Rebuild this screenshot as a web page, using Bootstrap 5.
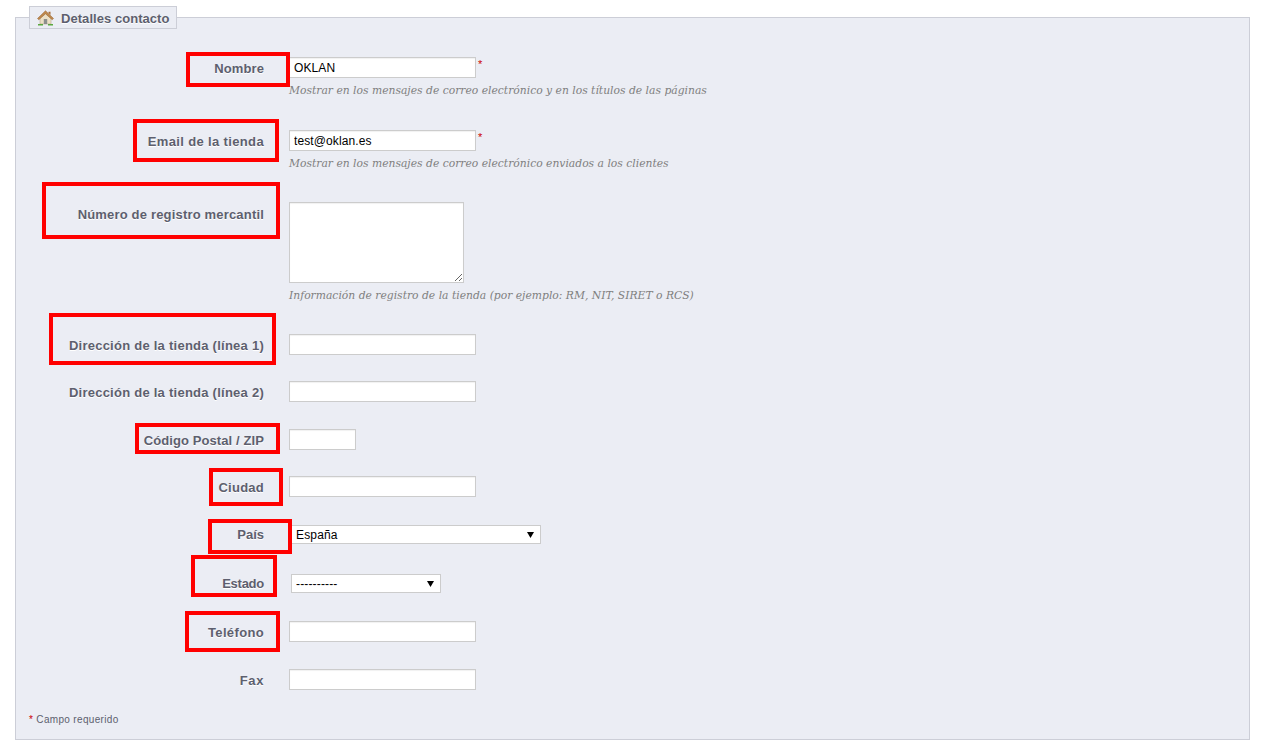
<!DOCTYPE html>
<html lang="es">
<head>
<meta charset="utf-8">
<title>Detalles contacto</title>
<link href="https://cdn.jsdelivr.net/npm/bootstrap@5.3.0/dist/css/bootstrap.min.css" rel="stylesheet">
<style>
html,body{background:#fff;height:753px;overflow:hidden}
body{font-family:"Liberation Sans",Arial,sans-serif;font-size:12px;color:#5d5f6e}
.sheet{position:relative;height:753px;padding:6px 15px 0}
.pane{background:#ebedf4;border:1px solid #ccced7;padding:28px 0 13px;height:734px}
.pane legend{float:none;width:auto;margin:0 0 0 13px;padding:0 6px 0 7px;height:23px;background:#ebedf4;border:1px solid #ccced7;font-size:13px;font-weight:700;line-height:23px;color:#5d5f6e;text-shadow:0 1px 0 #fff;display:flex;align-items:center;gap:7px}
.pane legend span{letter-spacing:.05px;padding-top:2px}
.gap26{margin-bottom:26px}
.gap27{margin-bottom:27px}
.gap28{margin-bottom:28px}
.gap31{margin-bottom:31px}
.gap32{margin-bottom:32px}
.flabel{width:248px;height:21px;margin:0 25px 0 0;flex:none;text-align:right;font-size:13px;font-weight:700;line-height:23px;letter-spacing:.25px;color:#5d5f6e;text-shadow:0 1px 0 #fff}
.flabel-top{padding-top:1px}
.flabel-sel{line-height:21px}
.track-nombre{letter-spacing:.1px}
.track-email{letter-spacing:.36px}
.track-numero{letter-spacing:.18px}
.track-codigo{letter-spacing:.1px}
.track-pais{letter-spacing:0}
.track-estado{letter-spacing:-.25px}
.track-tel{letter-spacing:.35px}
.track-fax{letter-spacing:.6px}
.form-control.finput{width:187px;height:21px;min-height:0;padding:0 4px;border:1px solid #ccc;border-radius:0;font-size:12px;line-height:19px;letter-spacing:.1px;color:#000;background:#fff;box-shadow:inset 0 1px 1px rgba(0,0,0,.06);font-family:"Liberation Sans",Arial,sans-serif}
.form-control.fshort{width:67px}
.form-control.farea{width:175px;height:81px;resize:both}
.form-select.fselect{height:19px;padding:1px 0 0 4px;border:1px solid #ccc;border-radius:0;font-size:12px;line-height:17px;letter-spacing:.15px;color:#000;margin-left:2px;box-shadow:none;background:#fff url("data:image/svg+xml,%3Csvg xmlns='http://www.w3.org/2000/svg' width='7' height='6'%3E%3Cpath d='M0 0h7L3.500 6z' fill='%23000'/%3E%3C/svg%3E") no-repeat right 6px center/7px 6px;font-family:"Liberation Sans",Arial,sans-serif}
.fwide{width:250px}
.fmid{width:150px}
.reqstar{color:#c00;font-size:11px;line-height:14px;margin-left:2px;align-self:flex-start}
.fhint{margin:6px 0 0 273px;font-family:"DejaVu Serif",Georgia,serif;font-style:italic;font-size:10.75px;line-height:14px;color:#7f7f7f}
.ffoot{margin:23px 0 0 13px;font-size:10px;line-height:14px;letter-spacing:.33px;color:#5d5f6e}
.ffoot b{color:#c00;font-weight:400}
.redbox{position:absolute;border:4px solid #f00;pointer-events:none}
.rb1{left:186px;top:52px;width:104px;height:35px}
.rb2{left:133px;top:119px;width:146px;height:43px}
.rb3{left:42px;top:182px;width:238px;height:57px}
.rb4{left:49px;top:313px;width:227px;height:52px}
.rb5{left:135px;top:423px;width:145px;height:31px}
.rb6{left:209px;top:468px;width:74px;height:38px}
.rb7{left:208px;top:519px;width:84px;height:35px}
.rb8{left:191px;top:555px;width:86px;height:42px}
.rb9{left:185px;top:611px;width:95px;height:41px}
</style>
</head>
<body>
<div class="sheet">
<fieldset class="pane">
<legend>
<svg width="17" height="16" viewBox="0 0 17 16" aria-hidden="true">
<path d="M3 8v6h11V8L8.500 3z" fill="#ece0c6" stroke="#b9a98a" stroke-width=".6"/>
<path d="M6.800 9h3.400v5H6.800z" fill="#8d8f8c"/>
<path d="M.5 8.500 8.500.8l8 7.700-1.300 1.200-6.700-5.900-6.700 5.900z" fill="#c08a4e" stroke="#8f5a28" stroke-width=".5"/>
<path d="M11.500 1.800h2v3.200l-2-1.900z" fill="#a86f38"/>
<path d="M1 14h5v1.600H1zM11 14h5v1.600h-5z" fill="#5aa83f"/>
</svg>
<span>Detalles contacto</span>
</legend>

<div class="gap32">
<div class="d-flex"><label class="flabel track-nombre" for="f1">Nombre</label><input id="f1" class="form-control finput" value="OKLAN"><span class="reqstar">*</span></div>
<p class="fhint">Mostrar en los mensajes de correo electrónico y en los títulos de las páginas</p>
</div>

<div class="gap31">
<div class="d-flex"><label class="flabel track-email" for="f2">Email de la tienda</label><input id="f2" class="form-control finput" value="test@oklan.es"><span class="reqstar">*</span></div>
<p class="fhint">Mostrar en los mensajes de correo electrónico enviados a los clientes</p>
</div>

<div class="gap31">
<div class="d-flex"><label class="flabel flabel-top track-numero" for="f3">Número de registro mercantil</label><textarea id="f3" class="form-control finput farea"></textarea></div>
<p class="fhint">Información de registro de la tienda (por ejemplo: RM, NIT, SIRET o RCS)</p>
</div>

<div class="d-flex gap26"><label class="flabel" for="f4">Dirección de la tienda (línea 1)</label><input id="f4" class="form-control finput"></div>
<div class="d-flex gap27"><label class="flabel" for="f5">Dirección de la tienda (línea 2)</label><input id="f5" class="form-control finput"></div>
<div class="d-flex gap26"><label class="flabel track-codigo" for="f6">Código Postal / ZIP</label><input id="f6" class="form-control finput fshort"></div>
<div class="d-flex gap27"><label class="flabel" for="f7">Ciudad</label><input id="f7" class="form-control finput"></div>
<div class="d-flex gap28 align-items-center"><label class="flabel flabel-sel track-pais" for="f8">País</label><select id="f8" class="form-select fselect fwide"><option>España</option></select></div>
<div class="d-flex gap27 align-items-center"><label class="flabel flabel-sel track-estado" for="f9">Estado</label><select id="f9" class="form-select fselect fmid"><option>----------</option></select></div>
<div class="d-flex gap27"><label class="flabel track-tel" for="f10">Teléfono</label><input id="f10" class="form-control finput"></div>
<div class="d-flex"><label class="flabel track-fax" for="f11">Fax</label><input id="f11" class="form-control finput"></div>

<div class="ffoot"><b>*</b> Campo requerido</div>
</fieldset>

<div class="redbox rb1"></div>
<div class="redbox rb2"></div>
<div class="redbox rb3"></div>
<div class="redbox rb4"></div>
<div class="redbox rb5"></div>
<div class="redbox rb6"></div>
<div class="redbox rb7"></div>
<div class="redbox rb8"></div>
<div class="redbox rb9"></div>
</div>
<script src="https://cdn.jsdelivr.net/npm/bootstrap@5.3.0/dist/js/bootstrap.bundle.min.js"></script>
</body>
</html>
